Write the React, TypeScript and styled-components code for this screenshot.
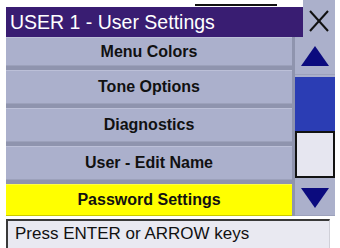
import React from 'react';
import styled, { createGlobalStyle } from 'styled-components';

const GlobalStyle = createGlobalStyle`
  html, body {
    margin: 0;
    padding: 0;
    background: #ffffff;
  }
  * {
    box-sizing: border-box;
  }
`;

const Screen = styled.div`
  width: 340px;
  height: 248px;
  overflow: hidden;
  padding: 0 5px 0 6px;
  background: #ffffff;
  font-family: 'Liberation Sans', Arial, sans-serif;
  display: flex;
  flex-direction: column;
`;

const Header = styled.div`
  position: relative;
  display: flex;
  height: 37px;

  &::before {
    content: '';
    position: absolute;
    left: 189px;
    top: 4px;
    width: 82px;
    height: 2px;
    background: #111;
  }
`;

const TitleBar = styled.div`
  flex: 1;
  margin-top: 7px;
  height: 30px;
  background: #391d72;
  color: #ffffff;
  font-size: 19.5px;
  line-height: 30px;
  padding-left: 4px;
  white-space: nowrap;
`;

const CloseButton = styled.div`
  width: 32px;
  height: 37px;
  background: #abb0cb;
  display: flex;
  align-items: center;
  justify-content: center;
  padding-top: 4px;
`;

const Body = styled.div`
  display: flex;
  height: 179px;
`;

const MenuList = styled.div`
  flex: 1;
  display: flex;
  flex-direction: column;
  gap: 4px;
  background: #8f94ae;
`;

const MenuRow = styled.div<{ $selected?: boolean; $height: number }>`
  height: ${p => p.$height}px;
  background: ${p => (p.$selected ? '#ffff00' : '#abb0cc')};
  border-top: 1px solid ${p => (p.$selected ? '#ffff40' : '#bcc0d8')};
  border-bottom: 1px solid ${p => (p.$selected ? '#c8c800' : '#9ca1bb')};
  display: flex;
  align-items: center;
  justify-content: center;
  font-size: 16px;
  font-weight: bold;
  color: #111111;
  white-space: nowrap;
`;

const ScrollColumn = styled.div`
  width: 43px;
  border-left: 3px solid #8f94ae;
  background: #abb0cb;
  display: flex;
  flex-direction: column;
`;

const ArrowButton = styled.div<{ $height: number }>`
  height: ${p => p.$height}px;
  display: flex;
  align-items: center;
  justify-content: center;
  background: #abb0cb;
  border-bottom: 1px solid #9ca1bb;
`;

const Thumb = styled.div`
  height: 54px;
  margin-top: 2px;
  background: #2b3db4;
`;

const Track = styled.div`
  height: 47px;
  background: #e6e6f0;
  border: 2px solid #121212;
  margin-bottom: 2px;
`;

const StatusBar = styled.div`
  margin-top: 3px;
  width: 324px;
  height: 30px;
  background: #e9e9f1;
  border-top: 2px solid #3a3a3a;
  border-left: 2px solid #3a3a3a;
  border-right: 1px solid #d0d0d8;
  font-size: 17px;
  color: #111111;
  padding: 3px 0 0 7px;
  white-space: nowrap;
`;

const items = [
  { label: 'Menu Colors', height: 29 },
  { label: 'Tone Options', height: 34 },
  { label: 'Diagnostics', height: 34 },
  { label: 'User - Edit Name', height: 34 },
  { label: 'Password Settings', height: 32, selected: true },
];

const Triangle: React.FC<{ down?: boolean }> = ({ down }) => (
  <svg width="28" height="20" viewBox="0 0 28 20">
    <polygon points={down ? '0,0 28,0 14,20' : '14,0 28,20 0,20'} fill="#0b0b7e" />
  </svg>
);

const App: React.FC = () => {
  return (
    <>
      <GlobalStyle />
      <Screen>
        <Header>
          <TitleBar>USER 1 - User Settings</TitleBar>
          <CloseButton>
            <svg width="20" height="22" viewBox="0 0 20 22">
              <line x1="1" y1="1" x2="19" y2="21" stroke="#111" strokeWidth="2" />
              <line x1="19" y1="1" x2="1" y2="21" stroke="#111" strokeWidth="2" />
            </svg>
          </CloseButton>
        </Header>
        <Body>
          <MenuList>
            {items.map(item => (
              <MenuRow key={item.label} $height={item.height} $selected={item.selected}>
                {item.label}
              </MenuRow>
            ))}
          </MenuList>
          <ScrollColumn>
            <ArrowButton $height={38}>
              <Triangle />
            </ArrowButton>
            <Thumb />
            <Track />
            <ArrowButton $height={36}>
              <Triangle down />
            </ArrowButton>
          </ScrollColumn>
        </Body>
        <StatusBar>Press ENTER or ARROW keys</StatusBar>
      </Screen>
    </>
  );
};

export default App;
